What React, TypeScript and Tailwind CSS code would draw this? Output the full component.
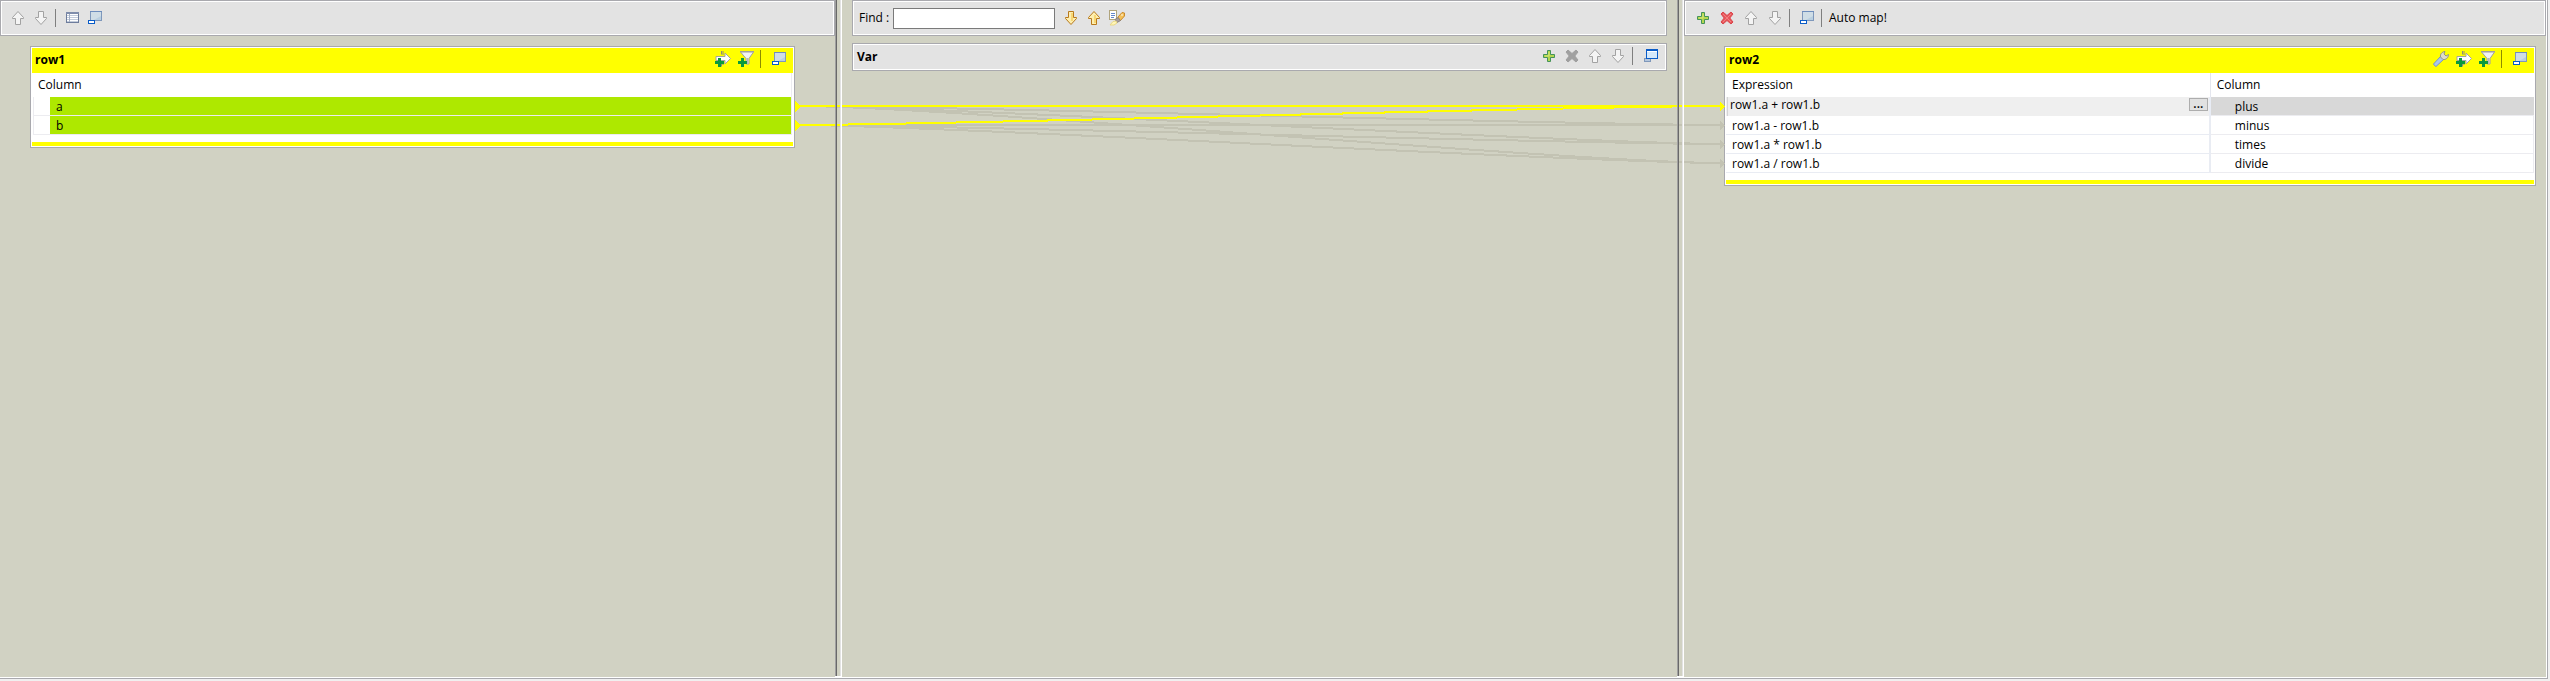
import type { ReactNode } from "react";

const ROW_COUNT = 4;
const rowY = (i: number) => 106 + 19 * i;

function Icon({ children }: { children: ReactNode }) {
  return (
    <svg viewBox="0 0 16 16" className="h-4 w-4 shrink-0" aria-hidden="true">
      {children}
    </svg>
  );
}

const UP = "M8 1.5 L13.5 7.5 V8.5 H10.5 V14.5 H5.5 V8.5 H2.5 V7.5 Z";
const DOWN = "M8 14.5 L13.5 8.5 V7.5 H10.5 V1.5 H5.5 V7.5 H2.5 V8.5 Z";

function ArrowIcon({ dir, gold }: { dir: "up" | "down"; gold?: boolean }) {
  return (
    <Icon>
      <path
        d={dir === "up" ? UP : DOWN}
        fill={gold ? "#fdeeb0" : "#f4f4f4"}
        stroke={gold ? "#b97a1c" : "#a2a2a2"}
        strokeLinejoin="round"
      />
      {gold && <path d={dir === "up" ? "M9 5v8" : "M9 3v8"} stroke="#f7d774" strokeWidth="2" />}
    </Icon>
  );
}

function TableIcon() {
  return (
    <Icon>
      <rect x="2.5" y="2.5" width="12" height="10" fill="#fff" stroke="#6d7c9c" />
      <path d="M2 3h13" stroke="#7f8dab" strokeWidth="2" />
      <path d="M3 5.5h11M3 7.5h11M3 9.5h11M3 11.5h11" stroke="#c3ccdb" />
      <path d="M5.5 4v8" stroke="#a3afc5" />
    </Icon>
  );
}

function MinimizeIcon() {
  return (
    <Icon>
      <rect x="3.5" y="1.5" width="11" height="9" fill="#b9cfe0" stroke="#7f98bb" />
      <path d="M4 2h10v4L7 10H4z" fill="#cfdde6" />
      <path d="M3 1.5h12" stroke="#6d8dbd" />
      <rect x="1.5" y="10.5" width="6" height="3" fill="#fff" stroke="#0a5cc8" />
    </Icon>
  );
}

function RestoreIcon() {
  return (
    <Icon>
      <rect x="1.5" y="10.5" width="6" height="3" fill="#b4c6dc" stroke="#7f98bb" />
      <rect x="3.5" y="1.5" width="11" height="9" fill="#d5e9fb" stroke="#0a5cc8" />
      <path d="M3 2h12" stroke="#0a5cc8" strokeWidth="2" />
      <path d="M4 3.5h10" stroke="#fff" />
    </Icon>
  );
}

function PlusIcon() {
  return (
    <Icon>
      <path
        d="M6.5 2.5h3v4h4v3h-4v4h-3v-4h-4v-3h4z"
        fill="#b4d64e"
        stroke="#44935a"
        strokeLinejoin="round"
      />
      <path d="M8 4v4H4" stroke="#d6e877" fill="none" />
    </Icon>
  );
}

function CrossIcon({ muted }: { muted?: boolean }) {
  return (
    <Icon>
      <path
        d="M4 2L8 5.5 12 2 14 4 10.8 8 14 12 12 14 8 10.5 4 14 2 12 5.2 8 2 4z"
        fill={muted ? "#a0a0a0" : "#e8585c"}
        stroke={muted ? "#a0a0a0" : "#d9434a"}
        strokeLinejoin="round"
      />
      {!muted && <path d="M4 4l8 8M12 4l-8 8" stroke="#f08080" />}
    </Icon>
  );
}

function GreenPlus() {
  return <path d="M3 7h3v3h3v3H6v3H3v-3H0v-3h3z" fill="#0a9a3c" />;
}

function InputArrowIcon() {
  return (
    <Icon>
      <path d="M6.5 0v3.5M6.5 12v3.5M8 0v4M8 11v3" stroke="#8c8c7a" fill="none" />
      <path d="M1 5.5h9V2l5.5 5.5L10 13V9.5H1z" fill="#fff" stroke="#a3a3a3" />
      <GreenPlus />
    </Icon>
  );
}

function FilterIcon() {
  return (
    <Icon>
      <path d="M2.5 1h13L11 7.5V13H8V7.5z" fill="#f3f3f3" stroke="#a0a0a0" />
      <path d="M2 .5h14" stroke="#a0a0a0" />
      <path d="M9.5 7v6" stroke="#b8b8b8" strokeWidth="2" />
      <GreenPlus />
    </Icon>
  );
}

function WrenchIcon() {
  return (
    <Icon>
      <path d="M1.5 14.5L.5 13l7-7.5 3 3-7.5 7z" fill="#a9c6ec" stroke="#7596c6" strokeLinejoin="round" />
      <path
        d="M7.5 6c-.5-2.5 1-5 4.500-5.500L11 3l2 2 2.500-1.500C15.500 7 12.500 9 10 8.500z"
        fill="#dedccb"
        stroke="#8f9384"
        strokeLinejoin="round"
      />
    </Icon>
  );
}

function HighlightIcon() {
  return (
    <Icon>
      <rect x=".5" y=".5" width="7" height="9" fill="#fff" stroke="#b0a47c" />
      <path d="M2 3.5h4M2 5.5h4M2 7.5h3" stroke="#6488cc" />
      <path d="M9 7l4-4.500 2.500.5v3L11 11z" fill="#f5c158" stroke="#c98a2c" strokeLinejoin="round" />
      <path d="M6 9.500L9 7.500l2.500 3L8 12.500z" fill="#a89e9b" stroke="#8a8280" />
      <path d="M1 15l3-3.500 3-.5 1 2-3 2z" fill="#fff6b8" stroke="#ead985" />
      <circle cx="13" cy="5" r=".8" fill="#fff" />
    </Icon>
  );
}

function ToolButton({ label, wide, children }: { label: string; wide?: boolean; children: ReactNode }) {
  return (
    <button
      type="button"
      aria-label={label}
      className={
        wide
          ? "flex h-[22px] w-6 items-center pl-1"
          : "flex h-[22px] w-[23px] items-center pl-[3px]"
      }
    >
      {children}
    </button>
  );
}

function Separator({ wide, onYellow }: { wide?: boolean; onYellow?: boolean }) {
  return (
    <div className={wide ? "flex h-[22px] w-[10px] items-center pl-[2px]" : "flex h-[22px] w-2 items-center pl-[2px]"}>
      <div className={onYellow ? "h-[18px] w-px bg-[#8c8c00]" : "h-[18px] w-px bg-[#7f7f7f]"} />
    </div>
  );
}

const FRAME = "border border-[#a9a9ae] outline outline-1 -outline-offset-2 outline-white";

function Toolbar({ children }: { children?: ReactNode }) {
  return <div className={`${FRAME} flex h-9 items-center bg-[#e3e3e3]`}>{children}</div>;
}

function Sash() {
  return (
    <div className="relative z-10 flex border-b border-white">
      <div className="w-px bg-[#a0a0a0]" />
      <div className="w-px bg-[#696969]" />
      <div className="flex-1" />
      <div className="w-px bg-[#e3e3e3]" />
      <div className="w-px bg-white" />
    </div>
  );
}

function TableCard({ name, settings, children }: { name: string; settings?: boolean; children: ReactNode }) {
  return (
    <section className="border border-[#a9a9ae] bg-white p-px">
      <header className="flex h-[25px] items-start bg-[#ffff00] pr-[2px] pl-[3px]">
        <h2 className="flex-1 leading-6 font-bold">{name}</h2>
        {settings && (
          <ToolButton label="Settings">
            <WrenchIcon />
          </ToolButton>
        )}
        <ToolButton label="Add input">
          <InputArrowIcon />
        </ToolButton>
        <ToolButton label="Add filter">
          <FilterIcon />
        </ToolButton>
        <Separator wide onYellow />
        <ToolButton label="Minimize">
          <MinimizeIcon />
        </ToolButton>
      </header>
      {children}
      <div className="mt-[7px] h-1 bg-[#ffff00]" />
    </section>
  );
}

const outputs = [
  { expression: "row1.a + row1.b", column: "plus" },
  { expression: "row1.a - row1.b", column: "minus" },
  { expression: "row1.a * row1.b", column: "times" },
  { expression: "row1.a / row1.b", column: "divide" },
];

function link(from: number, to: number) {
  const a = rowY(from);
  const b = rowY(to);
  return `M798 ${a} C943 ${a} 1577 ${b} 1721 ${b}`;
}

function Links() {
  const idle = [3, 2, 1].flatMap((to) => [link(0, to), link(1, to)]);
  const targets = Array.from({ length: ROW_COUNT }, (_, i) => i);
  return (
    <svg
      viewBox="0 0 2546 200"
      preserveAspectRatio="none"
      className="pointer-events-none absolute inset-x-0 top-0 h-[200px] w-full"
      shapeRendering="crispEdges"
      aria-hidden="true"
    >
      <g fill="none" strokeWidth="2">
        {idle.map((d) => (
          <path key={d} d={d} stroke="#c3c3b3" />
        ))}
        <path d={link(1, 0)} stroke="#ffff00" />
        <path d={link(0, 0)} stroke="#ffff00" />
      </g>
      {[0, 1].map((i) => (
        <path key={i} d={`M795 ${rowY(i) - 5}l5 5v1l-5 5z`} fill="#ffff00" />
      ))}
      {targets.map((i) => (
        <path key={i} d={`M1719 ${rowY(i) - 5}l5 5v1l-5 5z`} fill={i === 0 ? "#ffff00" : "#c3c3b3"} />
      ))}
    </svg>
  );
}

export default function App() {
  return (
    <div className="min-h-screen bg-[#f0f0f0] pr-[2px] pb-[2px] font-['Open_Sans','Noto_Sans',sans-serif] text-[12px] text-black">
      <main className="relative grid min-h-[calc(100vh-2px)] grid-cols-[835fr_7px_835fr_7px_862fr] border-r border-b border-[#a9a9ae] bg-[#d1d2c3] shadow-[inset_-1px_-1px_0_#fff] pr-px pb-px">
        <div>
          <Toolbar>
            <div className="flex pl-[6px]">
              <ToolButton label="Move up">
                <ArrowIcon dir="up" />
              </ToolButton>
              <ToolButton label="Move down">
                <ArrowIcon dir="down" />
              </ToolButton>
              <Separator />
              <ToolButton label="Show columns">
                <TableIcon />
              </ToolButton>
              <ToolButton label="Minimize all inputs">
                <MinimizeIcon />
              </ToolButton>
            </div>
          </Toolbar>
          <div className="mt-[10px] mr-10 ml-[30px]">
            <TableCard name="row1">
              <div className="px-px">
                <table className="w-full table-fixed border-separate border-spacing-0 border-r border-[#ececf0] text-left">
                  <thead>
                    <tr className="h-6">
                      <th className="p-0 pl-[5px] leading-5 font-normal">Column</th>
                    </tr>
                  </thead>
                  <tbody>
                    {["a", "b"].map((name) => (
                      <tr key={name} className="h-[19px]">
                        <td className="border-b border-l border-[#ececf0] p-0 pl-4">
                          <div className="h-[18px] bg-[#aee800] pt-[2px] pl-[6px] leading-4">{name}</div>
                        </td>
                      </tr>
                    ))}
                  </tbody>
                </table>
              </div>
            </TableCard>
          </div>
        </div>

        <Sash />

        <div className="px-[10px]">
          <Toolbar>
            <label htmlFor="find" className="ml-[6px] w-[34px] shrink-0 leading-4 whitespace-nowrap">
              Find :
            </label>
            <input id="find" type="text" className="h-[21px] w-[162px] border border-[#7a7a7a] bg-white px-1" />
            <div className="flex pl-[5px]">
              <ToolButton label="Find next">
                <ArrowIcon dir="down" gold />
              </ToolButton>
              <ToolButton label="Find previous">
                <ArrowIcon dir="up" gold />
              </ToolButton>
              <ToolButton label="Highlight matches">
                <HighlightIcon />
              </ToolButton>
            </div>
          </Toolbar>
          <div className={`${FRAME} mt-[7px] flex h-7 items-start bg-[#e3e3e3] pt-px pr-[3px] pl-1`}>
            <h2 className="flex-1 leading-6 font-bold">Var</h2>
            <ToolButton label="Add variable">
              <PlusIcon />
            </ToolButton>
            <ToolButton label="Remove variable">
              <CrossIcon muted />
            </ToolButton>
            <ToolButton label="Move variable up">
              <ArrowIcon dir="up" />
            </ToolButton>
            <ToolButton label="Move variable down">
              <ArrowIcon dir="down" />
            </ToolButton>
            <Separator wide />
            <ToolButton label="Restore">
              <RestoreIcon />
            </ToolButton>
          </div>
        </div>

        <Sash />

        <div>
          <Toolbar>
            <div className="flex pl-[6px]">
              <ToolButton wide label="Add output">
                <PlusIcon />
              </ToolButton>
              <ToolButton wide label="Remove output">
                <CrossIcon />
              </ToolButton>
              <ToolButton wide label="Move output up">
                <ArrowIcon dir="up" />
              </ToolButton>
              <ToolButton wide label="Move output down">
                <ArrowIcon dir="down" />
              </ToolButton>
              <Separator />
              <ToolButton wide label="Minimize all outputs">
                <MinimizeIcon />
              </ToolButton>
              <Separator />
              <button type="button" className="pl-[2px] leading-[22px]">
                Auto map!
              </button>
            </div>
          </Toolbar>
          <div className="mt-[10px] mr-[10px] ml-10">
            <TableCard name="row2" settings>
              <table className="w-full table-fixed border-separate border-spacing-0 text-left">
                <thead>
                  <tr className="h-6">
                    <th className="w-[60%] border-r border-[#e4e6ee] p-0 pl-[6px] leading-5 font-normal">Expression</th>
                    <th className="p-0 pl-[6px] leading-5 font-normal">Column</th>
                  </tr>
                </thead>
                <tbody>
                  {outputs.map((o, i) => (
                    <tr key={o.column} className="h-[19px]">
                      {i === 0 ? (
                        <td className="border-r-2 border-[#e8ecf5] bg-[#efefef] p-0">
                          <div className="ml-px flex h-[19px] items-start border-l border-[#d4d4d4] pr-px pl-[2px]">
                            <span className="flex-1 leading-4">{o.expression}</span>
                            <button
                              type="button"
                              aria-label="Edit expression"
                              className="mt-px flex h-[13px] w-[19px] items-center justify-center border border-[#adadad] bg-[#e1e1e1] pb-px leading-[10px] font-semibold"
                            >
                              ...
                            </button>
                          </div>
                        </td>
                      ) : (
                        <td className="border-r-2 border-b border-[#e9ecf3] p-0 pt-[2px] pl-[6px] leading-4">
                          {o.expression}
                        </td>
                      )}
                      <td
                        className={
                          i === 0
                            ? "border-b border-[#ececf0] bg-[#d8d8d8] p-0 pt-[2px] pl-6 leading-4"
                            : "border-r border-b border-[#ececf0] p-0 pt-[2px] pl-6 leading-4"
                        }
                      >
                        {o.column}
                      </td>
                    </tr>
                  ))}
                </tbody>
              </table>
            </TableCard>
          </div>
        </div>

        <Links />
      </main>
    </div>
  );
}
